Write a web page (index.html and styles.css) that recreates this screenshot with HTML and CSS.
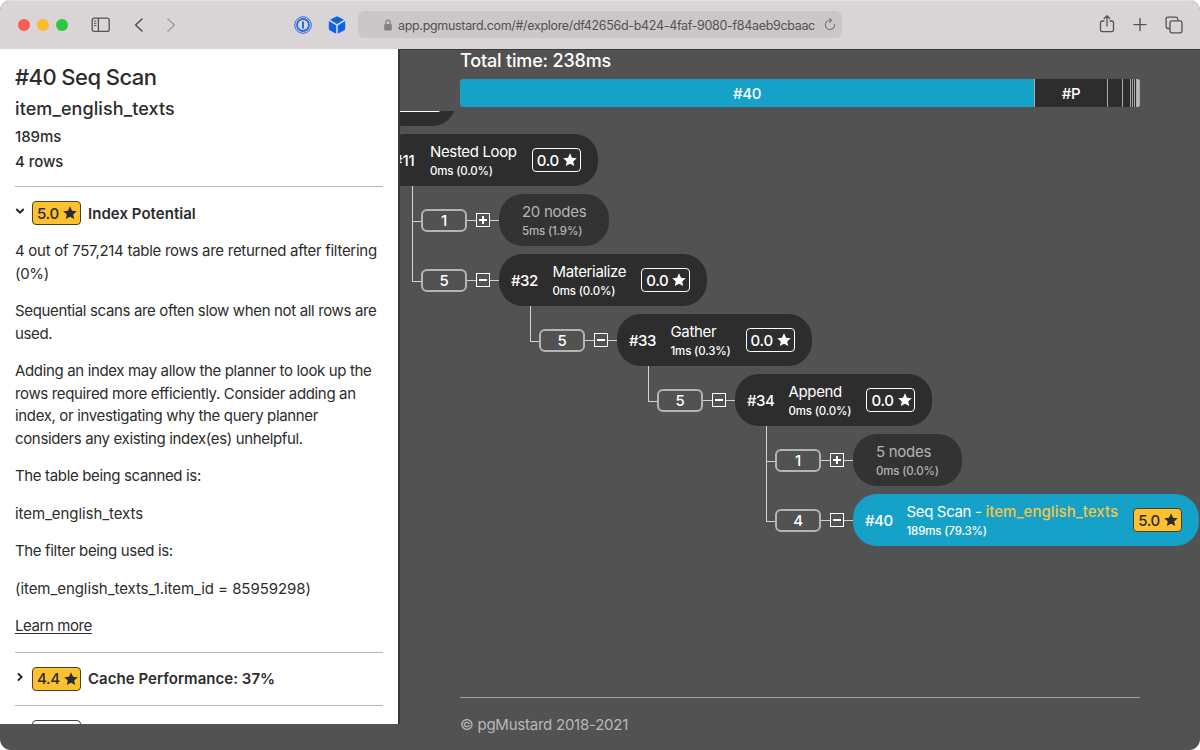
FILE: index.html
```html
<!DOCTYPE html>
<html lang="en">
<head>
  <meta charset="UTF-8">
  <meta name="viewport" content="width=device-width, initial-scale=1.0">
  <title>pgMustard</title>
  <link rel="stylesheet" href="styles.css">
</head>
<body>
  <svg class="defs" width="0" height="0">
    <symbol id="star" viewBox="0 0 14 14">
      <path d="M7 .3l2 4.400 4.800.5-3.600 3.200 1.050 4.700L7 10.700l-4.250 2.400L3.800 8.400.2 5.200 5 4.700z"/>
    </symbol>
  </svg>

  <div class="window">
    <header class="toolbar">
      <div class="lights">
        <span class="light red"></span>
        <span class="light yellow"></span>
        <span class="light green"></span>
      </div>
      <svg class="icon-sidebar" width="20" height="16" viewBox="0 0 20 16" fill="none" stroke="#555253" stroke-width="1.3">
        <rect x="1.2" y="1.2" width="17" height="13.2" rx="2"/>
        <path d="M7.4 1v13.4"/>
        <path d="M3 4h2.4M3 6.3h2.4M3 8.6h2.4" stroke-width="1"/>
      </svg>
      <svg class="icon-back" width="10" height="16" viewBox="0 0 10 16" fill="none" stroke="#4f4c4d" stroke-width="1.6" stroke-linecap="round" stroke-linejoin="round">
        <path d="M8 2L1.6 8 8 14"/>
      </svg>
      <svg class="icon-forward" width="10" height="16" viewBox="0 0 10 16" fill="none" stroke="#a39fa1" stroke-width="1.6" stroke-linecap="round" stroke-linejoin="round">
        <path d="M2 2l6.4 6L2 14"/>
      </svg>
      <svg class="icon-password" width="18" height="18" viewBox="0 0 18 18" fill="none" stroke="#2c6bdc">
        <circle cx="9" cy="9" r="8.3" stroke-width="1"/>
        <circle cx="9" cy="9" r="6" stroke-width="1.8"/>
        <path d="M9 5.6v6.8" stroke-width="2"/>
      </svg>
      <svg class="icon-cube" width="18" height="18" viewBox="0 0 18 18">
        <path fill="#0b63e5" d="M9 .2l7 3.6L9 8 2 3.8zM.8 5l7.4 4.4v8.3L2.2 14.6Q.8 13.800 .8 12.500zM17.200 5L9.800 9.400v8.300l6-3.100q1.400-.8 1.400-2.100z"/>
      </svg>
      <div class="address">
        <svg width="8" height="12" viewBox="0 0 8 12">
          <rect x=".2" y="5" width="7.600" height="6.500" rx="1" fill="#858183"/>
          <path d="M1.800 5.500V3.400a2.200 2.200 0 0 1 4.400 0v2.100" fill="none" stroke="#858183" stroke-width="1.200"/>
        </svg>
        <span class="url">app.pgmustard.com/#/explore/df42656d-b424-4faf-9080-f84aeb9cbaac</span>
        <svg width="12" height="13" viewBox="0 0 12 13" fill="none" stroke="#777375" stroke-width="1.100" stroke-linecap="round">
          <path d="M10.500 6.500a4.600 4.600 0 1 1-4.600-4.200h1.600M5.600.6l2 1.700-1.900 2"/>
        </svg>
      </div>
      <div class="actions">
        <svg width="16" height="20" viewBox="0 0 16 20" fill="none" stroke="#565354" stroke-width="1.300" stroke-linecap="round" stroke-linejoin="round">
          <path d="M5 6H3.200Q1.500 6 1.500 7.700v7.200q0 1.700 1.700 1.700h9.600q1.700 0 1.700-1.700V7.700Q14.500 6 12.800 6H11M8 11V.9M5.200 3.500L8 .7l2.800 2.800"/>
        </svg>
        <svg width="14" height="14" viewBox="0 0 14 14" stroke="#565354" stroke-width="1.400" stroke-linecap="round">
          <path d="M7 .6v12M1 6.600h12"/>
        </svg>
        <svg width="18" height="18" viewBox="0 0 18 18" fill="none" stroke="#565354" stroke-width="1.300" stroke-linejoin="round">
          <rect x="5" y="4.800" width="12" height="12" rx="2"/>
          <path d="M5 12.500H3q-1.900 0-1.900-1.900V3q0-1.900 1.900-1.900h7.800q1.900 0 1.900 1.900v1.800"/>
        </svg>
      </div>
    </header>

    <div class="page">
      <aside class="details">
        <h1>#40 Seq Scan</h1>
        <h2>item_english_texts</h2>
        <p class="stat">189ms</p>
        <p class="stat">4 rows</p>

        <section class="tip">
          <div class="tip-title">
            <svg class="chevron" width="10" height="10" viewBox="0 0 10 10"><path d="M1.300 3L5 6.600 8.700 3"/></svg>
            <span class="score hot">5.0 <svg><use href="#star"/></svg></span>
            <h3>Index Potential</h3>
          </div>
          <div class="tip-body">
            <p class="rows">4 out of 757,214 table rows are returned after filtering (0%)</p>
            <p>Sequential scans are often slow when not all rows are used.</p>
            <p>Adding an index may allow the planner to look up the rows required more efficiently. Consider adding an index, or investigating why the query planner considers any existing index(es) unhelpful.</p>
            <p>The table being scanned is:</p>
            <p class="expr">item_english_texts</p>
            <p>The filter being used is:</p>
            <p class="expr">(item_english_texts_1.item_id = 85959298)</p>
            <p><a href="#">Learn more</a></p>
          </div>
        </section>

        <section class="tip">
          <div class="tip-title">
            <svg class="chevron" width="10" height="10" viewBox="0 0 10 10"><path d="M3 1.300L6.600 5 3 8.700"/></svg>
            <span class="score hot">4.4 <svg><use href="#star"/></svg></span>
            <h3>Cache Performance: 37%</h3>
          </div>
        </section>

        <section class="tip">
          <div class="tip-title">
            <span class="chevron"></span>
            <span class="score empty"></span>
          </div>
        </section>
      </aside>

      <main class="plan">
        <div class="summary">
          <h2>Total time: 238ms</h2>
          <div class="timeline">
            <span class="seg main-seg">#40</span>
            <span class="seg planning">#P</span>
            <span class="seg s3"></span>
            <span class="seg s4"></span>
            <span class="seg s5"></span>
            <span class="seg s5"></span>
            <span class="seg s5"></span>
            <span class="seg rest"></span>
          </div>
        </div>

        <div class="viewport">
          <div class="tree">
            <div class="row">
              <div class="node parent"><span class="score empty"></span></div>
            </div>
            <div class="row first">
              <div class="node">
                <span class="id">#11</span>
                <div class="label">Nested Loop<small>0ms (0.0%)</small></div>
                <span class="score">0.0 <svg><use href="#star"/></svg></span>
              </div>
            </div>
            <div class="children">
              <div class="row">
                <span class="stem"></span>
                <span class="count">1</span>
                <span class="toggle plus"></span>
                <div class="node collapsed">
                  <div class="label">20 nodes<small>5ms (1.9%)</small></div>
                </div>
              </div>
              <div class="row last">
                <span class="stem"></span>
                <span class="count">5</span>
                <span class="toggle"></span>
                <div class="node">
                  <span class="id">#32</span>
                  <div class="label">Materialize<small>0ms (0.0%)</small></div>
                  <span class="score">0.0 <svg><use href="#star"/></svg></span>
                </div>
              </div>
              <div class="children nested">
                <div class="row last">
                  <span class="stem"></span>
                  <span class="count">5</span>
                  <span class="toggle"></span>
                  <div class="node">
                    <span class="id">#33</span>
                    <div class="label">Gather<small>1ms (0.3%)</small></div>
                    <span class="score">0.0 <svg><use href="#star"/></svg></span>
                  </div>
                </div>
                <div class="children nested">
                  <div class="row last">
                    <span class="stem"></span>
                    <span class="count">5</span>
                    <span class="toggle"></span>
                    <div class="node">
                      <span class="id">#34</span>
                      <div class="label">Append<small>0ms (0.0%)</small></div>
                      <span class="score">0.0 <svg><use href="#star"/></svg></span>
                    </div>
                  </div>
                  <div class="children nested">
                    <div class="row">
                      <span class="stem"></span>
                      <span class="count">1</span>
                      <span class="toggle plus"></span>
                      <div class="node collapsed">
                        <div class="label">5 nodes<small>0ms (0.0%)</small></div>
                      </div>
                    </div>
                    <div class="row last">
                      <span class="stem"></span>
                      <span class="count">4</span>
                      <span class="toggle"></span>
                      <div class="node selected">
                        <span class="id">#40</span>
                        <div class="label"><span>Seq Scan - <b>item_english_texts</b></span><small>189ms (79.3%)</small></div>
                        <span class="score hot">5.0 <svg><use href="#star"/></svg></span>
                      </div>
                    </div>
                  </div>
                </div>
              </div>
            </div>
          </div>
        </div>

        <footer>© pgMustard 2018-2021</footer>
      </main>
    </div>
  </div>
</body>
</html>
```
FILE: styles.css
```css
* {
  box-sizing: border-box;
}

body {
  margin: 0;
  background: #fff;
  font-family: Inter, "Liberation Sans", sans-serif;
  font-size: 15px;
  letter-spacing: -0.35px;
  color: #2c2c2c;
}

h1, h2, h3, p {
  margin: 0;
  font-weight: 500;
}

svg {
  display: block;
  flex: none;
}

.window {
  width: 1200px;
  height: 750px;
  display: flex;
  flex-direction: column;
  overflow: hidden;
  border-radius: 11px;
  background: #525252;
}

/* browser toolbar */
.toolbar {
  flex: none;
  height: 49px;
  display: flex;
  align-items: center;
  padding: 0 17px 1px 18px;
  background: #d9d5d7;
  border-top: 1px solid #e6e3e4;
}

.lights {
  display: flex;
  gap: 7px;
}

.light {
  width: 12px;
  height: 12px;
  border-radius: 50%;
}

.red { background: #fc5b54; }
.yellow { background: #fdbb2e; }
.green { background: #2ac840; }

.icon-sidebar { margin-left: 23px; }
.icon-back { margin-left: 23px; }
.icon-forward { margin-left: 22px; }
.icon-password { margin-left: 118px; }
.icon-cube { margin-left: 16px; }

.address {
  width: 484px;
  height: 27px;
  margin-left: 12px;
  padding: 0 6px 0 26px;
  display: flex;
  align-items: center;
  border-radius: 6px;
  background: #cbc7c9;
}

.url {
  width: 418px;
  margin: 1px 9px 0 6px;
  overflow: hidden;
  white-space: nowrap;
  font-size: 12.5px;
  letter-spacing: -0.32px;
  color: #545152;
}

.actions {
  margin-left: auto;
  display: flex;
  align-items: center;
  gap: 18px;
}

/* page */
.page {
  flex: 1;
  min-height: 0;
  display: flex;
  align-items: flex-start;
}

.details {
  flex: none;
  width: 400px;
  height: 675px;
  padding: 15px 15px 0 15px;
  overflow: hidden;
  background: #fff;
  border-right: 2px solid #383838;
}

.details h1 {
  font-size: 22px;
  line-height: 27px;
  letter-spacing: -0.55px;
}

.details h2 {
  margin-top: 6px;
  font-size: 18px;
  line-height: 24px;
  letter-spacing: 0.1px;
}

.stat {
  margin-top: 2px;
  line-height: 23px;
  letter-spacing: -0.05px;
}

.stat:first-of-type {
  margin-top: 4px;
}

.tip {
  padding-top: 14px;
  border-top: 1px solid #b5b5b5;
}

.stat + .tip {
  margin-top: 13px;
}

.tip-title {
  height: 24px;
  margin-bottom: 14px;
  display: flex;
  align-items: center;
}

.tip-title h3 {
  margin-left: 7px;
  font-size: 15px;
  font-weight: 600;
  letter-spacing: 0.04px;
}

.chevron {
  width: 10px;
  height: 10px;
  margin: -4px 7px 0 0;
  fill: none;
  stroke: #222;
  stroke-width: 1.9;
}

.tip-body {
  padding-top: 1px;
}

.tip-body p {
  margin-bottom: 15px;
  line-height: 22.5px;
  font-weight: 400;
}

.tip-body p:last-child {
  margin-bottom: 14px;
}

.tip-body .rows {
  letter-spacing: -0.28px;
}

.tip-body .expr {
  letter-spacing: -0.06px;
}

.tip-body a {
  color: inherit;
  letter-spacing: -0.42px;
  text-underline-offset: 2px;
}

.score {
  flex: none;
  width: 49px;
  height: 24px;
  display: flex;
  align-items: center;
  gap: 4px;
  padding-left: 4px;
  border: 1px solid #fff;
  border-radius: 4px;
  font-weight: 500;
  letter-spacing: -0.28px;
  white-space: nowrap;
}

.score svg {
  width: 14px;
  height: 14px;
  fill: currentColor;
}

.score.hot {
  background: #fdc030;
  border-color: #4a4026;
  color: #2c2c2c;
}

.details .score.empty {
  border-color: #444;
}

/* query plan */
.plan {
  flex: 1;
  min-width: 0;
  height: 701px;
  display: flex;
  flex-direction: column;
  border-top: 1px solid #3a3a3a;
  color: #fff;
}

.summary {
  flex: none;
  height: 61px;
  padding: 0 60px;
}

.summary h2 {
  font-size: 18px;
  line-height: 22px;
  letter-spacing: -0.16px;
}

.timeline {
  height: 28px;
  margin-top: 7px;
  display: flex;
  overflow: hidden;
  border-radius: 3px;
}

.seg {
  flex: none;
  display: flex;
  align-items: center;
  justify-content: center;
  background: #2d2d2d;
  border-right: 1px solid #aaa;
  font-weight: 500;
}

.main-seg {
  width: 575px;
  background: #16a1c9;
}

.planning { width: 73px; }
.s3 { width: 15px; }
.s4 { width: 8px; }
.s5 { width: 2px; }

.seg.rest {
  width: 3px;
  background: #bbb;
}

.viewport {
  flex: 1;
  min-height: 0;
  overflow: hidden;
}

.tree {
  width: 900px;
  margin: -45px 0 0 -19px;
}

.children {
  margin-left: 31px;
}

.children.nested {
  margin-left: 118px;
}

.row {
  height: 60px;
  display: flex;
  align-items: flex-start;
}

/* elbow line: upper half always, lower half unless last */
.stem {
  width: 9px;
}

.stem::before,
.stem::after {
  content: "";
  display: block;
  border-left: 1px solid #d2d2d2;
}

.stem::before {
  height: 35px;
  border-bottom: 1px solid #d2d2d2;
}

.stem::after {
  height: 25px;
}

.last > .stem::after {
  display: none;
}

.count {
  width: 46px;
  height: 23px;
  margin-top: 23px;
  border: 2px solid #b4b4b4;
  border-radius: 6px;
  line-height: 19px;
  text-align: center;
  font-weight: 500;
}

.toggle {
  width: 32px;
  height: 14px;
  margin-top: 27px;
  display: flex;
  align-items: center;
}

.toggle::before,
.toggle::after {
  content: "";
  flex: 1;
  height: 1px;
  background: #d2d2d2;
}

.toggle::before {
  flex: none;
  width: 23px;
  height: 14px;
  background:
    linear-gradient(#fff, #fff) 12px 6px / 8px 2px,
    linear-gradient(#fff, #fff) 9px 0 / 14px 1px,
    linear-gradient(#fff, #fff) 9px 13px / 14px 1px,
    linear-gradient(#fff, #fff) 9px 0 / 1px 14px,
    linear-gradient(#fff, #fff) 22px 0 / 1px 14px,
    linear-gradient(#d2d2d2, #d2d2d2) 0 7px / 9px 1px;
  background-repeat: no-repeat;
}

.toggle.plus::before {
  background:
    linear-gradient(#fff, #fff) 12px 6px / 8px 2px,
    linear-gradient(#fff, #fff) 15px 3px / 2px 8px,
    linear-gradient(#fff, #fff) 9px 0 / 14px 1px,
    linear-gradient(#fff, #fff) 9px 13px / 14px 1px,
    linear-gradient(#fff, #fff) 9px 0 / 1px 14px,
    linear-gradient(#fff, #fff) 22px 0 / 1px 14px,
    linear-gradient(#d2d2d2, #d2d2d2) 0 7px / 9px 1px;
  background-repeat: no-repeat;
}

.node {
  height: 52px;
  margin-top: 8px;
  padding: 0 17px 0 12px;
  display: flex;
  align-items: center;
  border-radius: 24px;
  background: #2d2d2d;
  white-space: nowrap;
}

.node.parent {
  width: 75px;
}

.id {
  width: 41.5px;
  font-weight: 500;
  letter-spacing: -0.5px;
}

.first .id {
  width: 37px;
  letter-spacing: -0.2px;
}

.label {
  margin: 2px 15px 0 0;
  line-height: 20px;
}

.label small {
  display: block;
  font-size: 11.5px;
  line-height: 18px;
  font-weight: 500;
  letter-spacing: -0.16px;
}

.label b {
  font-weight: 500;
  letter-spacing: 0.06px;
  color: #f4c542;
}

.node.collapsed {
  padding: 0 23px;
  background: #333;
  color: #b4b4b4;
}

.collapsed .label {
  margin-right: 0;
  letter-spacing: -0.28px;
}

.node.selected {
  background: #16a1c9;
}

footer {
  flex: none;
  height: 53px;
  margin: 0 60px;
  border-top: 1px solid #a0a0a0;
  line-height: 53px;
  letter-spacing: -0.24px;
  color: #b8b8b8;
}
```
